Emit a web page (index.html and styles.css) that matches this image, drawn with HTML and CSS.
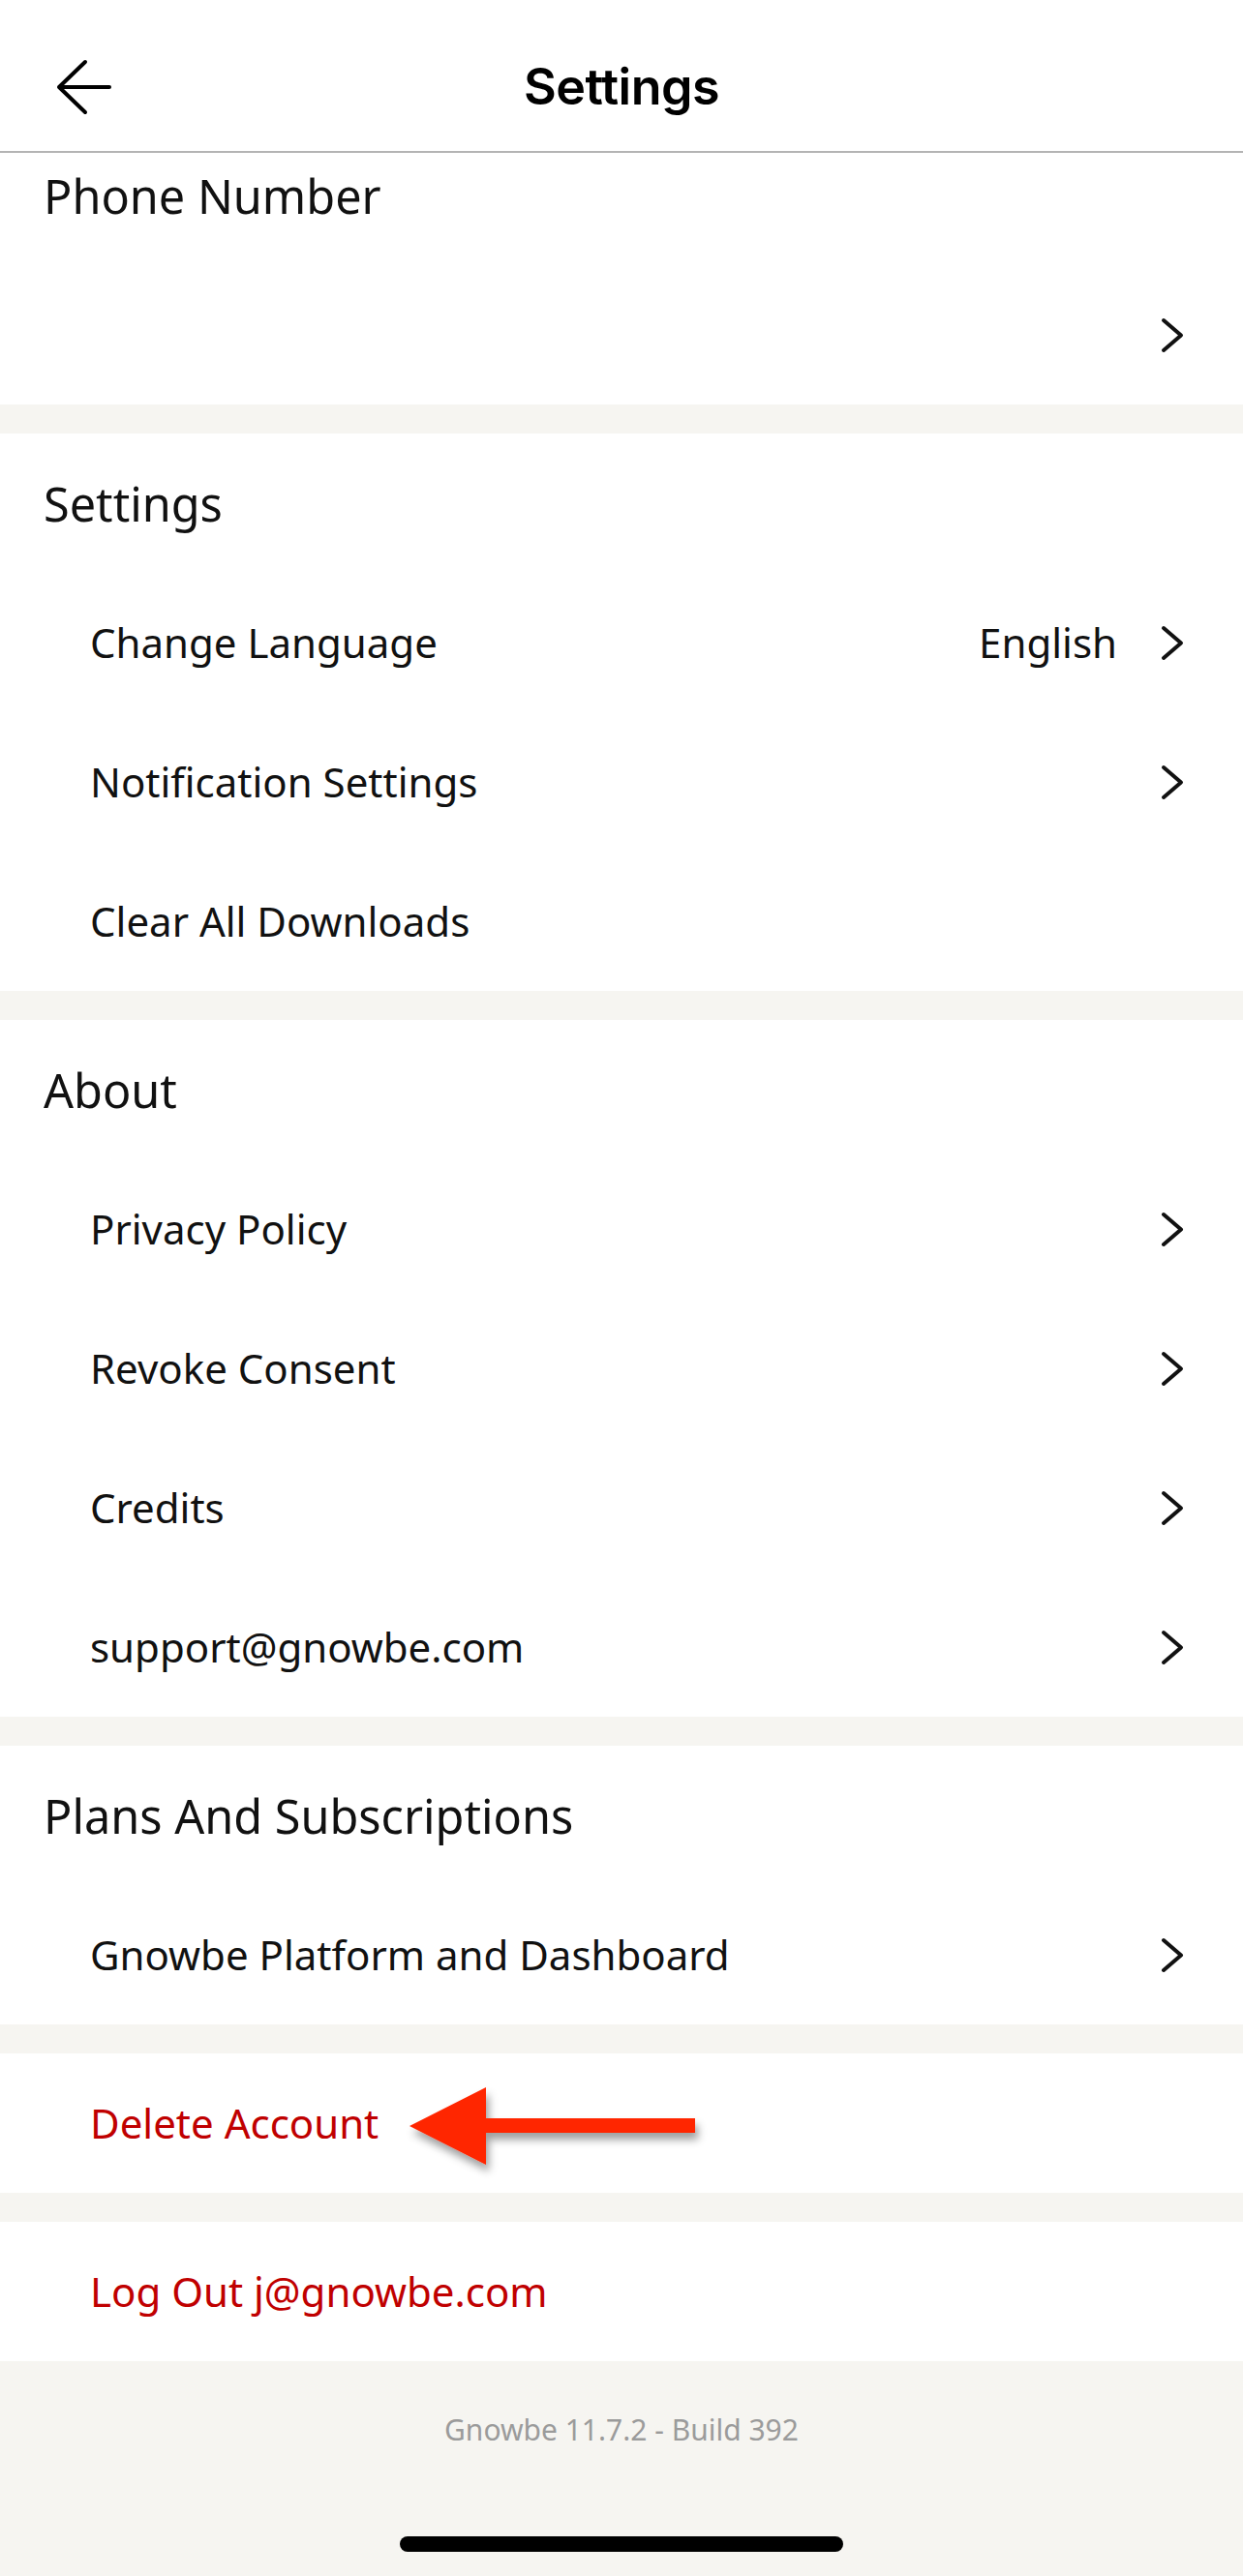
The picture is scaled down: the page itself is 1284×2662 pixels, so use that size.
FILE: index.html
```html
<!DOCTYPE html>
<html lang="en">
<head>
<meta charset="utf-8">
<title>Settings</title>
<link rel="stylesheet" href="styles.css">
</head>
<body>
<div class="screen">
  <header class="nav">
    <div class="nav-side">
      <button class="back" aria-label="Back">
        <svg width="60" height="60" viewBox="0 0 60 60"><path d="M31 4 L4 30 L31 56 M4 30 H56" fill="none" stroke="#000" stroke-width="4" stroke-linecap="round" stroke-linejoin="round"/></svg>
      </button>
    </div>
    <h1 class="nav-title">Settings</h1>
    <div class="nav-side"></div>
  </header>

  <main class="content">
    <section class="group">
      <div class="group-head group-head--clipped">Phone Number</div>
      <div class="row">
        <span class="row-label"></span>
        <svg class="chev" width="30" height="44" viewBox="0 0 30 44"><path d="M6 7 L24 22.5 L6 38" fill="none" stroke="#111" stroke-width="4" stroke-linecap="round" stroke-linejoin="round"/></svg>
      </div>
    </section>

    <section class="group">
      <div class="group-head">Settings</div>
      <div class="row">
        <span class="row-label">Change Language</span>
        <span class="row-value">English</span>
        <svg class="chev" width="30" height="44" viewBox="0 0 30 44"><path d="M6 7 L24 22.5 L6 38" fill="none" stroke="#111" stroke-width="4" stroke-linecap="round" stroke-linejoin="round"/></svg>
      </div>
      <div class="row">
        <span class="row-label">Notification Settings</span>
        <svg class="chev" width="30" height="44" viewBox="0 0 30 44"><path d="M6 7 L24 22.5 L6 38" fill="none" stroke="#111" stroke-width="4" stroke-linecap="round" stroke-linejoin="round"/></svg>
      </div>
      <div class="row">
        <span class="row-label">Clear All Downloads</span>
      </div>
    </section>

    <section class="group">
      <div class="group-head">About</div>
      <div class="row">
        <span class="row-label">Privacy Policy</span>
        <svg class="chev" width="30" height="44" viewBox="0 0 30 44"><path d="M6 7 L24 22.5 L6 38" fill="none" stroke="#111" stroke-width="4" stroke-linecap="round" stroke-linejoin="round"/></svg>
      </div>
      <div class="row">
        <span class="row-label">Revoke Consent</span>
        <svg class="chev" width="30" height="44" viewBox="0 0 30 44"><path d="M6 7 L24 22.5 L6 38" fill="none" stroke="#111" stroke-width="4" stroke-linecap="round" stroke-linejoin="round"/></svg>
      </div>
      <div class="row">
        <span class="row-label">Credits</span>
        <svg class="chev" width="30" height="44" viewBox="0 0 30 44"><path d="M6 7 L24 22.5 L6 38" fill="none" stroke="#111" stroke-width="4" stroke-linecap="round" stroke-linejoin="round"/></svg>
      </div>
      <div class="row">
        <span class="row-label">support@gnowbe.com</span>
        <svg class="chev" width="30" height="44" viewBox="0 0 30 44"><path d="M6 7 L24 22.5 L6 38" fill="none" stroke="#111" stroke-width="4" stroke-linecap="round" stroke-linejoin="round"/></svg>
      </div>
    </section>

    <section class="group">
      <div class="group-head">Plans And Subscriptions</div>
      <div class="row">
        <span class="row-label">Gnowbe Platform and Dashboard</span>
        <svg class="chev" width="30" height="44" viewBox="0 0 30 44"><path d="M6 7 L24 22.5 L6 38" fill="none" stroke="#111" stroke-width="4" stroke-linecap="round" stroke-linejoin="round"/></svg>
      </div>
    </section>

    <section class="group">
      <div class="row row--danger row--annotated">
        <span class="row-label">Delete Account</span>
        <svg class="callout" width="330" height="110" viewBox="0 0 330 110">
          <defs>
            <filter id="sh" x="-10%" y="-20%" width="130%" height="160%">
              <feDropShadow dx="3" dy="7" stdDeviation="4" flood-color="#000" flood-opacity="0.38"/>
            </filter>
          </defs>
          <polygon points="8,47 87,7 87,39 303,39 303,54 87,54 87,87" fill="#ff2600" filter="url(#sh)"/>
        </svg>
      </div>
    </section>

    <section class="group">
      <div class="row row--danger">
        <span class="row-label">Log Out j@gnowbe.com</span>
      </div>
    </section>
  </main>

  <footer class="footer">
    <p class="version">Gnowbe 11.7.2 - Build 392</p>
    <div class="home-indicator"></div>
  </footer>
</div>
</body>
</html>
```

FILE: styles.css
```css
* {
  box-sizing: border-box;
}

html, body {
  margin: 0;
  padding: 0;
}

body {
  background: #f6f5f1;
  font-family: "Noto Sans", "Open Sans", sans-serif;
  color: #111;
}

.screen {
  width: 1284px;
  min-height: 2662px;
  display: flex;
  flex-direction: column;
}

.nav {
  height: 158px;
  padding-top: 24px;
  background: #fff;
  border-bottom: 2px solid #b4b4b4;
  display: grid;
  grid-template-columns: 1fr auto 1fr;
  align-items: center;
}

.nav-side {
  display: flex;
  align-items: center;
}

.back {
  border: 0;
  background: none;
  padding: 0;
  margin-left: 57px;
  width: 60px;
  height: 60px;
  display: flex;
}

.nav-title {
  margin: 0;
  font-family: Inter, "Noto Sans", sans-serif;
  font-weight: 600;
  font-size: 52px;
  line-height: 1;
  color: #000;
  letter-spacing: -0.5px;
}

.content {
  display: flex;
  flex-direction: column;
  gap: 30px;
}

.group {
  background: #fff;
  display: flex;
  flex-direction: column;
}

.group-head {
  height: 144px;
  display: flex;
  align-items: center;
  padding-left: 45px;
  font-size: 48.6px;
  line-height: 1;
  color: #111;
}

.group-head--clipped {
  height: 116px;
  padding-bottom: 28px;
}

.row {
  height: 144px;
  display: flex;
  align-items: center;
  padding-left: 93px;
  padding-right: 58px;
  font-size: 42px;
  line-height: 1;
  color: #111;
}

.row-label {
  flex: 1;
}

.row-value {
  margin-right: 42px;
}

.chev {
  flex: none;
  display: block;
}

.row--danger {
  color: #c00000;
}

.row--annotated {
  position: relative;
}

.row--annotated .row-label {
  flex: none;
}

.callout {
  position: absolute;
  left: 415px;
  top: 28px;
  display: block;
}

.footer {
  flex: 1;
  display: flex;
  flex-direction: column;
  align-items: center;
  padding-top: 56px;
}

.version {
  margin: 0;
  font-size: 30px;
  line-height: 30px;
  color: #9b9b9b;
}

.home-indicator {
  margin-top: 95px;
  width: 458px;
  height: 16px;
  border-radius: 8px;
  background: #000;
}
```
